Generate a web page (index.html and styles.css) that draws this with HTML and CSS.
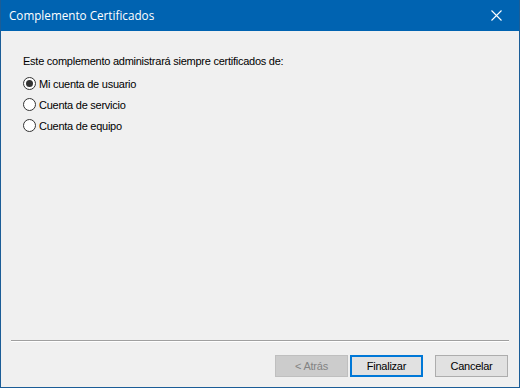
FILE: index.html
```html
<!DOCTYPE html>
<html>
<head>
<meta charset="UTF-8">
<title>Complemento Certificados</title>
<link rel="stylesheet" href="styles.css">
</head>
<body>
<div class="window">
	<div class="titlebar">
		<span class="title">Complemento Certificados</span>
		<span class="close">
			<svg width="11" height="11" viewBox="0 0 11 11"><path d="M0.5 0.5 L10.5 10.5 M10.5 0.5 L0.5 10.5" stroke="#ffffff" stroke-width="1.1" fill="none"/></svg>
		</span>
	</div>
	<div class="content">
		<div class="main">
			<div class="prompt">Este complemento administrará siempre certificados de:</div>
			<div class="options">
				<div class="option"><span class="radio checked"></span><span>Mi cuenta de usuario</span></div>
				<div class="option"><span class="radio"></span><span>Cuenta de servicio</span></div>
				<div class="option"><span class="radio"></span><span>Cuenta de equipo</span></div>
			</div>
		</div>
		<div class="separator"></div>
		<div class="buttons">
			<button class="btn btn_disabled">&lt; Atrás</button>
			<button class="btn btn_default">Finalizar</button>
			<button class="btn btn_cancel">Cancelar</button>
		</div>
	</div>
</div>
</body>
</html>
```
FILE: styles.css
```css
/* base */
body {
	margin: 0;
	font-family: "Liberation Sans", Arial, sans-serif;
	font-size: 11px;
	letter-spacing: -0.25px;
	color: #000000;
}

/* window frame */
.window {
	width: 520px;
	height: 388px;
	box-sizing: border-box;
	border: 1px solid #1b5d97;
	border-top: 0;
	display: flex;
	flex-direction: column;
	background-color: #f0f0f0;
}

.titlebar {
	height: 31px;
	background-color: #0063b1;
	display: flex;
	align-items: center;
	justify-content: space-between;
	padding: 0 17px 0 8px;
	color: #ffffff;
}

.title {
	font-family: "Open Sans", "Noto Sans", sans-serif;
	font-size: 11.7px;
	letter-spacing: 0;
	padding-bottom: 1px;
}

.close {
	display: flex;
}

/* content */
.content {
	flex: 1;
	display: flex;
	flex-direction: column;
}

.main {
	flex: 1;
	padding: 24px 0 0 22px;
}

.prompt {
	line-height: 13px;
}

.options {
	margin-top: 5px;
}

.option {
	height: 21px;
	display: flex;
	align-items: center;
}

.radio {
	width: 11px;
	height: 11px;
	border: 1px solid #333333;
	border-radius: 50%;
	background-color: #ffffff;
	margin-right: 3px;
	display: flex;
	align-items: center;
	justify-content: center;
}

.radio.checked::after {
	content: "";
	width: 7px;
	height: 7px;
	border-radius: 50%;
	background-color: #333333;
}

.separator {
	margin: 0 10px;
	border-top: 1px solid #a0a0a0;
	border-bottom: 1px solid #ffffff;
}

/* buttons */
.buttons {
	display: flex;
	justify-content: flex-end;
	padding: 13px 11px 10px 0;
}

.btn {
	width: 73px;
	height: 22px;
	box-sizing: border-box;
	font-family: "Liberation Sans", Arial, sans-serif;
	font-size: 11px;
	letter-spacing: -0.25px;
	background-color: #e1e1e1;
	border: 1px solid #adadad;
	padding: 0;
	color: #000000;
}

.btn_disabled {
	background-color: #cccccc;
	border-color: #bfbfbf;
	color: #838383;
}

.btn_default {
	margin-left: 2px;
	border: 2px solid #0078d7;
}

.btn_cancel {
	margin-left: 12px;
}
```
